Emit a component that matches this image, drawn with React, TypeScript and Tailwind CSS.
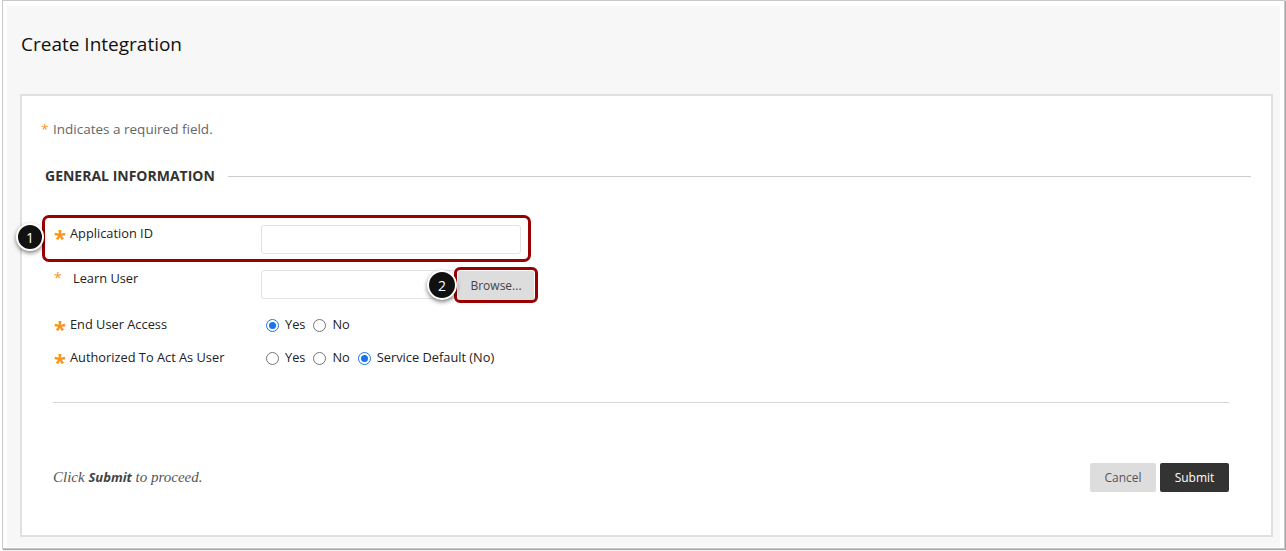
import React from 'react';

const Star: React.FC<{ big?: boolean }> = ({ big }) => (
  <span
    className={
      big
        ? 'w-[16px] text-[22px] leading-[18px] text-[#f7941d] font-bold translate-y-[4px]'
        : 'w-[19px] text-[14px] leading-[18px] text-[#f7941d]'
    }
  >
    *
  </span>
);

const Radio: React.FC<{ checked?: boolean; label: string }> = ({ checked, label }) => (
  <label className="flex items-center gap-[6px] mr-[8px]">
    {checked ? (
      <span className="w-[13px] h-[13px] rounded-full border border-[#1a73e8] bg-white flex items-center justify-center translate-y-[1px]">
        <span className="w-[7px] h-[7px] rounded-full bg-[#1a73e8]" />
      </span>
    ) : (
      <span className="w-[13px] h-[13px] rounded-full border border-[#767676] bg-white translate-y-[1px]" />
    )}
    <span>{label}</span>
  </label>
);

const Badge: React.FC<{ n: number; className: string }> = ({ n, className }) => (
  <div
    className={`absolute rounded-full bg-[#111] border-2 border-white text-white text-[14px] flex items-center justify-center shadow-[0_2px_4px_rgba(0,0,0,0.5)] ${className}`}
  >
    {n}
  </div>
);

export default function App() {
  return (
    <div className="w-[1286px] h-[551px] bg-white pl-[2px] font-['Open_Sans',sans-serif]">
      <div className="w-[1283px] h-[549px] border border-[#c8c8c8] shadow-[1px_1px_1px_rgba(0,0,0,0.35)] px-[4px] pt-[5px] pb-[1px]">
        <div className="h-full bg-[#f7f7f7] flex flex-col pl-[13px] pr-[7px] pb-[10px]">
          <h1 className="pl-[1px] pt-[25px] h-[88px] text-[19px] leading-[26px] text-[#111]">Create Integration</h1>

          <div className="relative flex-1 bg-white border-2 border-[#e0e0e0] text-[#333] text-[13px]">
            <div className="pt-[23px] pl-[19px] flex items-center text-[13.5px] leading-[20px] text-[#666]">
              <span className="text-[#f7941d] w-[12px]">*</span>
              <span>Indicates a required field.</span>
            </div>

            <div className="mt-[27px] pl-[23px] pr-[20px] flex items-center gap-[13px]">
              <span className="text-[14px] leading-[20px] font-bold text-[#333]">GENERAL INFORMATION</span>
              <div className="flex-1 h-px bg-[#cccccc]" />
            </div>

            <div className="mt-[39px] pl-[32px] flex flex-col gap-[15px] text-[12.8px] leading-[18px] text-[#222]">
              <div className="flex h-[29px]">
                <div className="w-[207px] flex -translate-y-[1px]">
                  <Star big />
                  <span>Application ID</span>
                </div>
                <div className="w-[260px] h-[29px] border border-[#e3e3e3] rounded-[3px] bg-white" />
              </div>

              <div className="flex h-[31px] mt-[1px]">
                <div className="w-[207px] flex -translate-y-[1px]">
                  <Star />
                  <span>Learn User</span>
                </div>
                <div className="w-[194px] h-[29px] border border-[#e3e3e3] rounded-[3px] bg-white" />
                <div className="ml-[3px] mt-[1px] w-[76px] h-[29px] bg-[#dddddd] rounded-[2px] text-[12px] text-[#444] flex items-center justify-center">
                  Browse...
                </div>
              </div>

              <div className="flex -translate-y-[1px]">
                <div className="w-[212px] flex">
                  <Star big />
                  <span>End User Access</span>
                </div>
                <Radio checked label="Yes" />
                <Radio label="No" />
              </div>

              <div className="flex -translate-y-[1px]">
                <div className="w-[212px] flex">
                  <Star big />
                  <span>Authorized To Act As User</span>
                </div>
                <Radio label="Yes" />
                <Radio label="No" />
                <Radio checked label="Service Default (No)" />
              </div>
            </div>

            <div className="mt-[35px] ml-[31px] mr-[42px] h-px bg-[#d6d6d6]" />

            <div className="mt-[60px] ml-[31px] mr-[42px] flex items-center">
              <p className="flex-1 font-['Liberation_Serif',serif] italic text-[15px] text-[#555]">
                Click <span className="font-['Open_Sans',sans-serif] font-bold text-[13px] text-[#444]">Submit</span> to proceed.
              </p>
              <div className="flex gap-[4px]">
                <div className="w-[66px] h-[29px] bg-[#dddddd] rounded-[2px] text-[12px] text-[#555] flex items-center justify-center">
                  Cancel
                </div>
                <div className="w-[69px] h-[29px] bg-[#333333] rounded-[2px] text-[12px] text-white flex items-center justify-center">
                  Submit
                </div>
              </div>
            </div>

            <div className="absolute left-[20px] top-[119px] w-[489px] h-[47px] border-[3px] border-[#990000] rounded-[7px]" />
            <div className="absolute left-[432px] top-[171px] w-[84px] h-[36px] border-[3px] border-[#990000] rounded-[6px]" />
            <Badge n={1} className="left-[-6px] top-[127px] w-[28px] h-[28px]" />
            <Badge n={2} className="left-[405px] top-[174px] w-[30px] h-[30px]" />
          </div>
        </div>
      </div>
    </div>
  );
}
